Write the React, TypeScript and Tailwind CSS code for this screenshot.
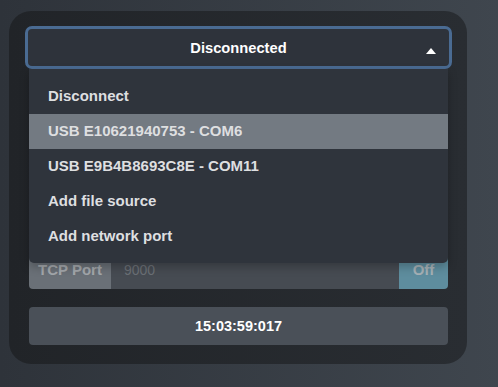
import React from "react";

const items = [
  "Disconnect",
  "USB E10621940753 - COM6",
  "USB E9B4B8693C8E - COM11",
  "Add file source",
  "Add network port",
];

export default function App() {
  return (
    <div
      className="w-[498px] h-[387px] pl-[9px] pt-[11px] bg-[linear-gradient(to_right,#2e333a,#3f464e)]"
      style={{ fontFamily: '"Liberation Sans", Arial, sans-serif' }}
    >
      <div className="w-[458px] h-[353px] rounded-[22px] bg-[linear-gradient(to_right,#212428,#292d32)] pl-5 pr-[19px] pt-[15px] flex flex-col">
        <div className="relative -mx-1">
          <div className="h-[43px] rounded-[7px] border-[3px] border-[#4a6b92] bg-[#2e333b] flex items-center justify-center relative pt-[2px]">
            <span className="text-white font-bold text-[14.7px]">Disconnected</span>
            <svg
              className="absolute right-[13px] top-[19px]"
              width="10"
              height="6"
              viewBox="0 0 10 6"
            >
              <polygon points="5,0 10,6 0,6" fill="#ffffff" />
            </svg>
          </div>
          <div className="absolute left-1 right-1 top-full z-10 bg-[#2f343c] rounded-b-[5px] pt-[10px] pb-[9px] shadow-[0_4px_10px_rgba(0,0,0,0.25)]">
            {items.map((t, i) => (
              <div
                key={t}
                className={
                  "h-[35px] flex items-center pl-[19px] font-bold text-[15px] text-[#dedfe0] " +
                  (i === 1 ? "bg-[#737a82]" : "")
                }
              >
                {t}
              </div>
            ))}
          </div>
        </div>
        <div className="h-[182px]" />
        <div className="h-[38px] flex rounded-[4px] overflow-hidden">
          <div className="w-[82px] bg-[#6a7077] flex items-center justify-center font-bold text-[15px] text-[#a3a7ab]">
            TCP Port
          </div>
          <div className="flex-1 bg-[#464b52] flex items-center pl-[13px] text-[14px] text-[#6b7076]">
            9000
          </div>
          <div className="w-[49px] bg-[#5e8d9e] flex items-center justify-center font-bold text-[15px] text-[#a6b1b6]">
            Off
          </div>
        </div>
        <div className="mt-[18px] h-[38px] rounded-[4px] bg-[#4a5058] flex items-center justify-center font-bold text-[14.5px] text-white pt-px">
          15:03:59:017
        </div>
      </div>
    </div>
  );
}
